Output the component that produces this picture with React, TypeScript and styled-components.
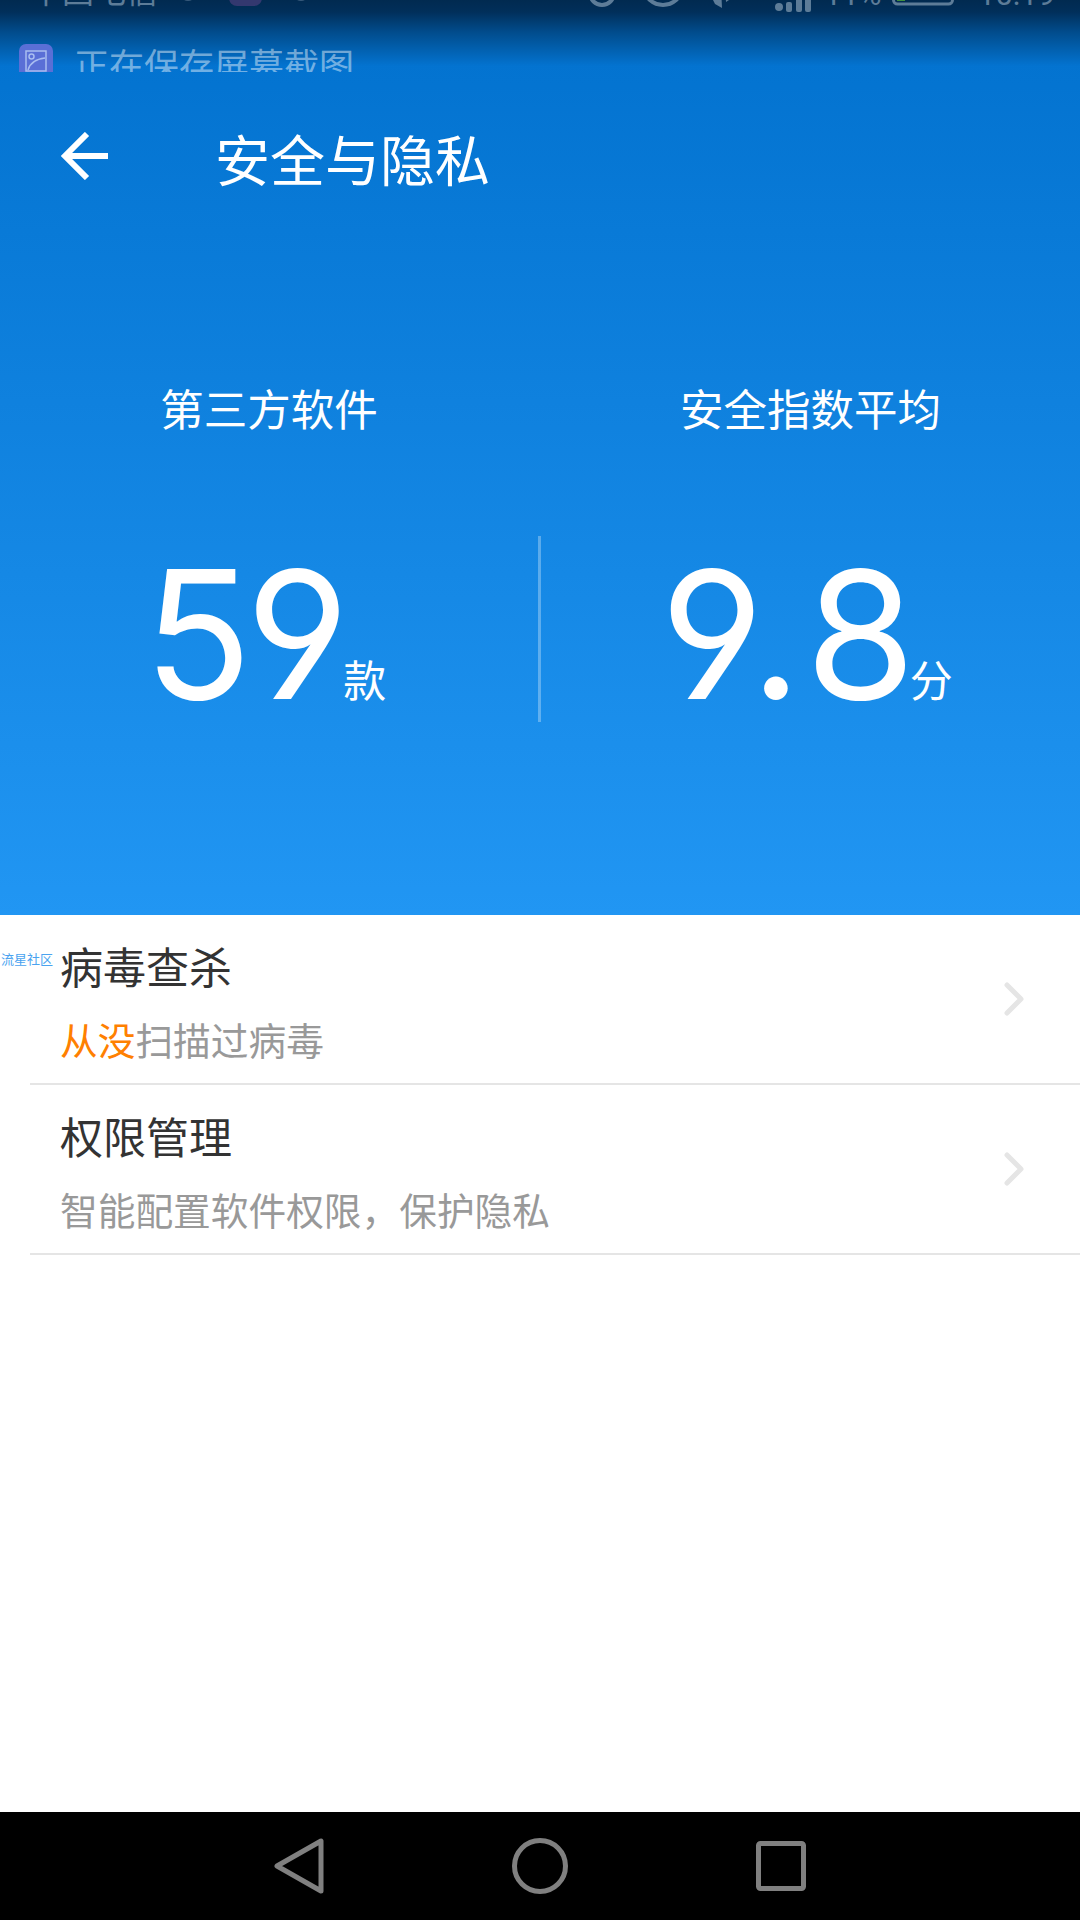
import styled, { createGlobalStyle } from 'styled-components'

const GlobalStyle = createGlobalStyle`
  html, body {
    margin: 0;
    padding: 0;
    background: #fff;
  }

  body {
    font-family: "Noto Sans CJK SC", "Noto Sans", sans-serif;
  }
`

const Page = styled.div`
  width: 1080px;
  height: 1920px;
  display: flex;
  flex-direction: column;
  position: relative;
  overflow: hidden;
  background: #fff;
`

const Header = styled.header`
  height: 915px;
  display: flex;
  flex-direction: column;
  color: #fff;
  background:
    linear-gradient(180deg, #012a50 0px, #012f5a 12px, #014c8c 32px, rgba(3, 115, 208, 0) 66px),
    linear-gradient(180deg, #0373d0 60px, #2196f3 915px);
`

const StatusBar = styled.div`
  height: 44px;
  overflow: hidden;
`

const StatusInner = styled.div`
  height: 34px;
  margin-top: -22px;
  padding: 0 14px 0 30px;
  display: flex;
  align-items: flex-end;
  color: #5d7c98;
  font-family: Roboto, sans-serif;
`

const Carrier = styled.span`
  width: 150px;
  margin-bottom: 6px;
  font-family: "Noto Sans CJK SC", sans-serif;
  font-size: 32px;
  line-height: 34px;
`

const Spacer = styled.div`
  flex: 1;
`

const StatusDot = styled.span<{ $gap: number }>`
  width: 12px;
  height: 12px;
  margin: 0 ${(p) => p.$gap}px 11px 0;
  border: 2px solid #5d7c98;
  border-radius: 50%;
  opacity: 0.6;
`

const AppBadge = styled.span`
  width: 33px;
  height: 34px;
  margin: 0 31px 6px 0;
  border-radius: 8px;
  background: #33386f;
`

const StatusText = styled.span<{ $width: number; $size?: number; $lift?: number }>`
  width: ${(p) => p.$width}px;
  margin-bottom: ${(p) => p.$lift ?? 0}px;
  font-size: ${(p) => p.$size ?? 31}px;
  line-height: 34px;
  white-space: nowrap;
`

const StatusIcon = styled.svg<{ $gap: number; $lift?: number }>`
  display: block;
  margin: 0 ${(p) => p.$gap}px ${(p) => p.$lift ?? 0}px 0;
  flex: none;
`

const Notification = styled.div`
  height: 28px;
  overflow: hidden;
  padding-left: 19px;
  display: flex;
  gap: 21px;
  align-items: flex-start;
`

const NotificationIcon = styled.div`
  width: 34px;
  height: 34px;
  flex: none;
  border-radius: 7px;
  background: #5a6fd6;
  display: flex;
  align-items: center;
  justify-content: center;
`

const NotificationText = styled.span`
  font-size: 35px;
  line-height: 40px;
  color: rgba(255, 255, 255, 0.45);
  white-space: nowrap;
`

const TopBar = styled.div`
  height: 168px;
  padding-left: 60px;
  display: flex;
  align-items: center;
`

const BackIcon = styled.svg`
  display: block;
  flex: none;
  width: 50px;
  height: 48px;
  margin-right: 105px;
`

const PageTitle = styled.h1`
  margin: 1px 0 0;
  font-size: 55px;
  line-height: 72px;
  font-weight: 400;
`

const Stats = styled.div`
  margin-top: 138px;
  display: grid;
  grid-template-columns: 538px 3px 539px;
  grid-template-rows: 60px 186px;
  row-gap: 98px;
`

const StatLabel = styled.div<{ $column: number }>`
  grid-row: 1;
  grid-column: ${(p) => p.$column};
  text-align: center;
  font-size: 43.5px;
  line-height: 60px;
`

const StatValue = styled.div<{ $column: number }>`
  grid-row: 2;
  grid-column: ${(p) => p.$column};
  display: flex;
  justify-content: center;
  align-items: flex-end;
  padding: 11px 8px 0 0;
`

const Divider = styled.div`
  grid-row: 2;
  grid-column: 2;
  background: rgba(255, 255, 255, 0.3);
`

const StatNumber = styled.span`
  font-family: Inter, Roboto, sans-serif;
  font-weight: 400;
  font-feature-settings: "cv04" 1;
  font-size: 178px;
  line-height: 175px;
  letter-spacing: -6px;
`

const LooseDigits = styled.span`
  letter-spacing: 4px;
`

const Unit = styled.span`
  margin-bottom: 23px;
  font-size: 43px;
  line-height: 42px;
`

const List = styled.div`
  flex: 1;
  display: flex;
  flex-direction: column;
`

const Row = styled.div`
  height: 170px;
  box-sizing: border-box;
  margin-left: 30px;
  padding: 22px 54px 0 30px;
  border-bottom: 2px solid #e5e5e5;
  display: flex;
  align-items: center;
  justify-content: space-between;
`

const RowBody = styled.div`
  display: flex;
  flex-direction: column;
  align-self: flex-start;
  margin-top: -2px;
  gap: 18px;
`

const RowTitle = styled.div`
  font-size: 43px;
  line-height: 60px;
  color: #333;
`

const RowSub = styled.div`
  font-size: 37.7px;
  line-height: 52px;
  color: #999;
`

const Accent = styled.span`
  color: #ff8000;
`

const Chevron = styled.svg`
  display: block;
  flex: none;
  width: 24px;
  height: 36px;
  margin-top: -22px;
`

const Watermark = styled.span`
  position: absolute;
  left: 1px;
  top: 950px;
  font-size: 13px;
  line-height: 18px;
  color: #4aa3f0;
`

const NavBar = styled.nav`
  height: 108px;
  flex: none;
  background: #000;
  display: flex;
  align-items: center;
  justify-content: center;
  gap: 188px;
`

const NavIcon = styled.svg`
  display: block;
  flex: none;
`

export default function App() {
  return (
    <Page>
      <GlobalStyle />
      <Header>
        <StatusBar>
          <StatusInner>
            <Carrier>中国电信</Carrier>
            <StatusDot $gap={33} />
            <AppBadge />
            <StatusDot $gap={0} />
            <Spacer />
            <StatusIcon $gap={27} $lift={5} width="28" height="34" viewBox="0 0 28 34" fill="none" stroke="#5d7c98" strokeWidth="4">
              <circle cx="14" cy="20" r="12" />
            </StatusIcon>
            <StatusIcon $gap={28} $lift={5} width="40" height="34" viewBox="0 0 40 34" fill="none" stroke="#5d7c98" strokeWidth="4">
              <ellipse cx="20" cy="16" rx="18" ry="16" />
              <circle cx="20" cy="16" r="7" />
            </StatusIcon>
            <StatusIcon $gap={19} $lift={2} width="24" height="34" viewBox="0 0 24 34" fill="#5d7c98">
              <path d="M0 20 L10 10 L11 32 L4 28 Z M14 10 L24 20 L15 26 Z" />
            </StatusIcon>
            <StatusText $width={21} $size={22} $lift={3}>2G</StatusText>
            <StatusIcon $gap={13} width="36" height="34" viewBox="0 0 36 34" fill="#5d7c98">
              <circle cx="4" cy="29" r="4" />
              <rect x="11" y="24" width="6" height="10" rx="2" />
              <rect x="21" y="10" width="6" height="24" rx="2" />
              <rect x="30" y="2" width="6" height="32" rx="2" />
            </StatusIcon>
            <StatusText $width={68}>11%</StatusText>
            <StatusIcon $gap={24} $lift={6} width="62" height="34" viewBox="0 0 62 34" fill="none">
              <rect x="1.5" y="2" width="59" height="30" rx="4" stroke="#5d7c98" strokeWidth="3" />
              <rect x="5" y="24" width="8" height="5" fill="#3f8f3f" />
            </StatusIcon>
            <StatusText $width={88}>10:19</StatusText>
          </StatusInner>
        </StatusBar>
        <Notification>
          <NotificationIcon>
            <svg width="22" height="22" viewBox="0 0 22 22" fill="none" stroke="#a9bdf0" strokeWidth="1.5">
              <rect x="1" y="1" width="20" height="20" />
              <circle cx="6.5" cy="6.5" r="2.5" />
              <path d="M3 20 C5 13 11 9 20 8" />
            </svg>
          </NotificationIcon>
          <NotificationText>正在保存屏幕截图</NotificationText>
        </Notification>
        <TopBar>
          <BackIcon viewBox="0 0 50 48" fill="none" stroke="#fff" strokeWidth="6">
            <path d="M48 24 H5 M27 2 L5 24 L27 46" />
          </BackIcon>
          <PageTitle>安全与隐私</PageTitle>
        </TopBar>
        <Stats>
          <StatLabel $column={1}>第三方软件</StatLabel>
          <StatLabel $column={3}>安全指数平均</StatLabel>
          <StatValue $column={1}>
            <StatNumber>59</StatNumber>
            <Unit>款</Unit>
          </StatValue>
          <Divider />
          <StatValue $column={3}>
            <StatNumber><LooseDigits>9.</LooseDigits>8</StatNumber>
            <Unit>分</Unit>
          </StatValue>
        </Stats>
      </Header>
      <List>
        <Row>
          <RowBody>
            <RowTitle>病毒查杀</RowTitle>
            <RowSub><Accent>从没</Accent>扫描过病毒</RowSub>
          </RowBody>
          <Chevron viewBox="0 0 24 36" fill="none" stroke="#e5e5e5" strokeWidth="5" strokeLinecap="round" strokeLinejoin="round">
            <path d="M5 4 L19 18 L5 32" />
          </Chevron>
        </Row>
        <Row>
          <RowBody>
            <RowTitle>权限管理</RowTitle>
            <RowSub>智能配置软件权限，保护隐私</RowSub>
          </RowBody>
          <Chevron viewBox="0 0 24 36" fill="none" stroke="#e5e5e5" strokeWidth="5" strokeLinecap="round" strokeLinejoin="round">
            <path d="M5 4 L19 18 L5 32" />
          </Chevron>
        </Row>
      </List>
      <Watermark>流星社区</Watermark>
      <NavBar>
        <NavIcon width="50" height="56" viewBox="0 0 50 56" fill="none" stroke="#808080" strokeWidth="5" strokeLinejoin="round">
          <path d="M47 3 V53 L3 28 Z" />
        </NavIcon>
        <NavIcon width="56" height="56" viewBox="0 0 56 56" fill="none" stroke="#808080" strokeWidth="5">
          <circle cx="28" cy="28" r="25.5" />
        </NavIcon>
        <NavIcon width="50" height="50" viewBox="0 0 50 50" fill="none" stroke="#808080" strokeWidth="5" strokeLinejoin="round">
          <rect x="2.5" y="2.5" width="45" height="45" rx="2" />
        </NavIcon>
      </NavBar>
    </Page>
  )
}
